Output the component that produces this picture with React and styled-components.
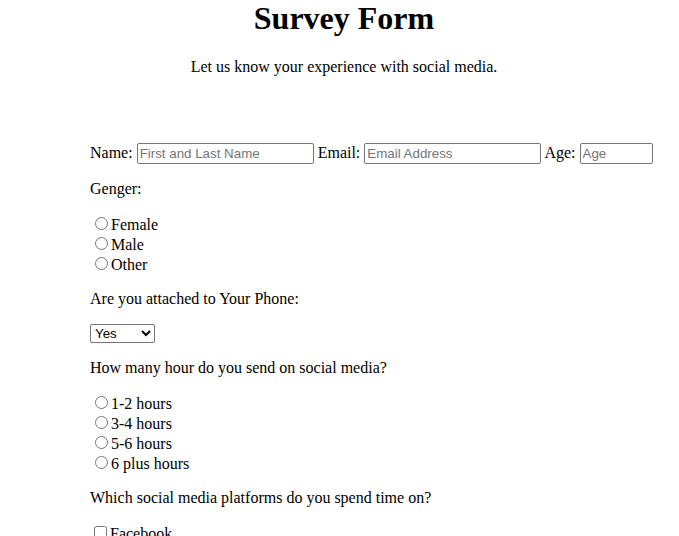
import React from 'react';
import styled, { createGlobalStyle } from 'styled-components';

const GlobalStyle = createGlobalStyle`
  html, body {
    margin: 0;
    padding: 0;
    background: #ffffff;
    color: #000000;
    font-family: "Liberation Serif", "Times New Roman", serif;
    font-size: 16px;
  }
`;

const Page = styled.div`
  width: 679px;
  height: 536px;
  overflow: hidden;
`;

const Header = styled.header`
  text-align: center;
  padding-left: 9px;
`;

const Title = styled.h1`
  margin: 0 0 21px;
  font-size: 32px;
  font-weight: bold;
`;

const Subtitle = styled.p`
  margin: 0;
  font-size: 16px;
`;

const Form = styled.form`
  margin-top: 67px;
  padding-left: 90px;
`;

const Row = styled.p`
  margin: 0 0 16px;
`;

const Options = styled.div`
  margin: 0 0 16px;
`;

const TextField = styled.input`
  box-sizing: border-box;
  width: ${(p) => p.$w}px;
  height: 21px;
  padding: 1px 2px;
  border: 1px solid #767676;
  border-radius: 2px;
  font-family: "Liberation Sans", Arial, sans-serif;
  font-size: 13.33px;
  color: #000;
  &::placeholder {
    color: #757575;
  }
`;

const Select = styled.select`
  box-sizing: border-box;
  width: 65px;
  height: 19px;
  border: 1px solid #767676;
  border-radius: 2px;
  font-family: "Liberation Sans", Arial, sans-serif;
  font-size: 13.33px;
  background: #fff;
  color: #000;
`;

const Radio = styled.input.attrs({ type: 'radio' })`
  margin: 3px 3px 0 5px;
`;

const Check = styled.input.attrs({ type: 'checkbox' })`
  margin: 3px 3px 3px 4px;
`;

const hours = ['1-2 hours', '3-4 hours', '5-6 hours', '6 plus hours'];
const genders = ['Female', 'Male', 'Other'];
const platforms = ['Facebook', 'Instagram', 'Twitter', 'Snapchat', 'TikTok'];

export default function App() {
  return (
    <Page>
      <GlobalStyle />
      <Header>
        <Title>Survey Form</Title>
        <Subtitle>Let us know your experience with social media.</Subtitle>
      </Header>
      <Form onSubmit={(e) => e.preventDefault()}>
        <Row>
          Name: <TextField $w={177} type="text" placeholder="First and Last Name" />{' '}
          Email: <TextField $w={177} type="email" placeholder="Email Address" />{' '}
          Age: <TextField $w={73} type="number" placeholder="Age" />
        </Row>
        <Row>Genger:</Row>
        <Options>
          {genders.map((g) => (
            <React.Fragment key={g}>
              <Radio name="gender" />{g}<br />
            </React.Fragment>
          ))}
        </Options>
        <Row>Are you attached to Your Phone:</Row>
        <Row>
          <Select defaultValue="yes">
            <option value="yes">Yes</option>
            <option value="no">No</option>
          </Select>
        </Row>
        <Row>How many hour do you send on social media?</Row>
        <Options>
          {hours.map((h) => (
            <React.Fragment key={h}>
              <Radio name="hours" />{h}<br />
            </React.Fragment>
          ))}
        </Options>
        <Row>Which social media platforms do you spend time on?</Row>
        <Options>
          {platforms.map((p) => (
            <React.Fragment key={p}>
              <Check name="platform" />{p}<br />
            </React.Fragment>
          ))}
        </Options>
      </Form>
    </Page>
  );
}
